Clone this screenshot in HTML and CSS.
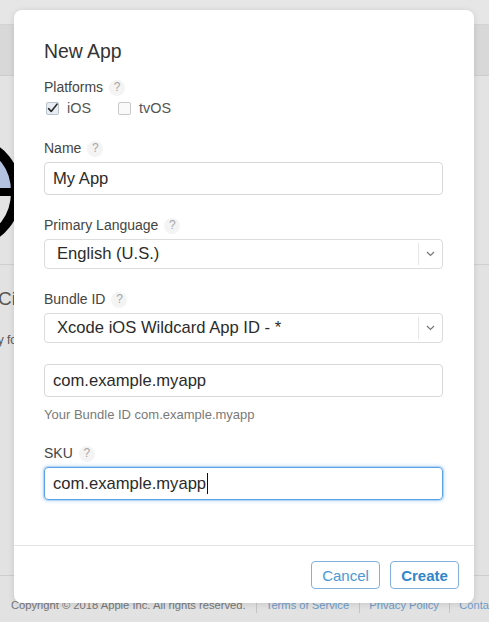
FILE: index.html
```html
<!DOCTYPE html>
<html lang="en">
<head>
<meta charset="utf-8">
<title>New App</title>
<link rel="stylesheet" href="styles.css">
</head>
<body>
<div class="page">
  <header class="topbar"></header>
  <nav class="subnav"></nav>
  <section class="hero">
    <svg class="hero-logo" width="14" height="110" viewBox="0 0 14 110" aria-hidden="true">
      <clipPath id="top-half"><rect x="-80" y="0" width="120" height="52"/></clipPath>
      <ellipse cx="-20" cy="53" rx="36" ry="46" fill="#e4e4e4"/>
      <ellipse cx="-20" cy="53" rx="36" ry="46" fill="#b3c2e0" clip-path="url(#top-half)"/>
      <rect x="-60" y="49" width="80" height="8" fill="#000"/>
      <ellipse cx="-20" cy="53" rx="36" ry="46" fill="none" stroke="#000" stroke-width="10"/>
    </svg>
  </section>
  <main class="intro">
    <p class="intro-title">Ci</p>
    <p class="intro-text">ly for</p>
  </main>
  <footer class="site-footer">
    <span class="copy">Copyright © 2018 Apple Inc. All rights reserved.</span>
    <span class="sep"></span>
    <a class="link">Terms of Service</a>
    <span class="sep"></span>
    <a class="link">Privacy Policy</a>
    <span class="sep"></span>
    <a class="link">Conta</a>
  </footer>
</div>

<div class="dialog" role="dialog" aria-labelledby="dlg-title">
  <div class="dialog-body">
    <h1 class="dialog-title" id="dlg-title">New App</h1>

    <div class="label">Platforms <span class="help">?</span></div>
    <div class="platforms">
      <span class="check">
        <span class="box checked">
          <svg width="13" height="13" viewBox="0 0 13 13"><path d="M2.6 6.6 L5.2 9.4 L11 2.2" fill="none" stroke="#2c2c2c" stroke-width="1.6" stroke-linecap="round" stroke-linejoin="round"/></svg>
        </span>iOS
      </span>
      <span class="check"><span class="box"></span>tvOS</span>
    </div>

    <div class="label">Name <span class="help">?</span></div>
    <div class="input">My App</div>

    <div class="label gap">Primary Language <span class="help">?</span></div>
    <div class="select">
      <span class="select-value">English (U.S.)</span>
      <span class="select-arrow">
        <svg width="9" height="6" viewBox="0 0 9 6"><path d="M1 1 L4.5 4.5 L8 1" fill="none" stroke="#777" stroke-width="1.2"/></svg>
      </span>
    </div>

    <div class="label gap">Bundle ID <span class="help">?</span></div>
    <div class="select">
      <span class="select-value">Xcode iOS Wildcard App ID - *</span>
      <span class="select-arrow">
        <svg width="9" height="6" viewBox="0 0 9 6"><path d="M1 1 L4.5 4.5 L8 1" fill="none" stroke="#777" stroke-width="1.2"/></svg>
      </span>
    </div>
    <div class="input gap-sm">com.example.myapp</div>
    <div class="hint">Your Bundle ID com.example.myapp</div>

    <div class="label gap">SKU <span class="help">?</span></div>
    <div class="input focused">com.example.myapp<span class="caret"></span></div>
  </div>
  <div class="dialog-footer">
    <button class="btn">Cancel</button>
    <button class="btn primary">Create</button>
  </div>
</div>
</body>
</html>
```
FILE: styles.css
```css
* { box-sizing: border-box; }

html, body {
  margin: 0;
  width: 489px;
  height: 622px;
  overflow: hidden;
  background: #dedede;
  font-family: "Liberation Sans", Arial, sans-serif;
  color: #333;
}

/* page behind the dialog (dimmed) */
.page {
  height: 622px;
  display: flex;
  flex-direction: column;
  background: #e2e2e2;
}

.topbar {
  height: 25px;
  background: #e6e6e6;
  border-bottom: 1px solid #d3d3d3;
}

.subnav {
  height: 51px;
  background: #d8d8d8;
  border-bottom: 1px solid #cdcdcd;
}

.hero {
  height: 189px;
  border-bottom: 1px solid #cfcfcf;
  background: #e3e3e3;
  padding-top: 63px;
}

.hero-logo { display: block; }

.intro {
  flex: 1;
  padding-top: 22px;
}

.intro-title {
  margin: 0 0 0 -2px;
  font-size: 19px;
  line-height: 24px;
  color: #555;
}

.intro-text {
  margin: 21px 0 0 -5px;
  font-size: 12px;
  line-height: 16px;
  color: #555;
}

.site-footer {
  height: 47px;
  border-top: 1px solid #cdcdcd;
  padding: 21px 0 0 11px;
  display: flex;
  align-items: flex-start;
  white-space: nowrap;
  overflow: hidden;
  font-size: 11.2px;
  line-height: 16px;
}

.site-footer .copy { color: #777; }
.site-footer .link { color: #6f9cc8; }
.site-footer .sep {
  width: 1px;
  height: 16px;
  background: #c4c4c4;
  margin: 0 10px;
}

/* dialog */
.dialog {
  position: absolute;
  left: 14px;
  top: 10px;
  width: 460px;
  height: 593px;
  background: #fff;
  border-radius: 8px;
  box-shadow: 0 1px 6px rgba(0, 0, 0, 0.12);
  display: flex;
  flex-direction: column;
}

.dialog-body {
  flex: 1;
  padding: 30px 31px 0 30px;
}

.dialog-title {
  margin: 0 0 16px;
  font-size: 19.4px;
  line-height: 23px;
  font-weight: normal;
  color: #333;
}

.label {
  font-size: 14px;
  line-height: 17px;
  color: #444;
  margin-bottom: 5px;
  display: flex;
  align-items: center;
}

.label.gap { margin-top: 22px; }

.help {
  display: inline-flex;
  align-items: center;
  justify-content: center;
  width: 16px;
  height: 16px;
  margin-left: 6px;
  border-radius: 50%;
  background: #f4f4f4;
  color: #a6a6a6;
  font-size: 12px;
}

.platforms {
  display: flex;
  gap: 27px;
  margin: -2px 0 23px 2px;
  height: 18px;
  align-items: center;
}

.check {
  display: flex;
  align-items: center;
  gap: 8px;
  font-size: 14.4px;
  color: #555;
}

.box {
  width: 13px;
  height: 13px;
  border: 1px solid #c9c9c9;
  border-radius: 2px;
  background: #fafafa;
  position: relative;
}

.box.checked { background: #e8edf3; border-color: #b9c2cc; }
.box svg { position: absolute; left: -1px; top: -1px; }

.input {
  height: 33px;
  border: 1px solid #d8d8d8;
  border-radius: 4px;
  padding: 0 8px;
  font-size: 16.6px;
  line-height: 31px;
  color: #2b2b2b;
  display: flex;
  align-items: center;
}

.input.gap-sm { margin-top: 21px; }

.input.focused {
  border-color: #5aa2e4;
  box-shadow: 0 0 0 1px rgba(120, 180, 240, 0.35), 0 0 4px rgba(90, 162, 228, 0.6);
}

.caret {
  display: inline-block;
  width: 1px;
  height: 21px;
  background: #111;
  margin-left: 1px;
}

.select {
  height: 30px;
  border: 1px solid #dcdcdc;
  border-radius: 4px;
  display: flex;
  align-items: stretch;
}

.select-value {
  flex: 1;
  padding-left: 12px;
  font-size: 16.6px;
  line-height: 28px;
  color: #2b2b2b;
}

.select-arrow {
  width: 24px;
  margin: 3px 0;
  border-left: 1px solid #e6e6e6;
  display: flex;
  align-items: center;
  justify-content: center;
}

.hint {
  margin-top: 10px;
  font-size: 13px;
  line-height: 16px;
  color: #7a7a7a;
}

.dialog-footer {
  height: 58px;
  border-top: 1px solid #e4e4e4;
  display: flex;
  justify-content: flex-end;
  gap: 10px;
  padding: 15px 15px 0 0;
}

.btn {
  width: 69px;
  height: 28px;
  border: 1px solid #82b2dc;
  border-radius: 4px;
  background: #fff;
  color: #4a98d6;
  font-family: "Liberation Sans", Arial, sans-serif;
  font-size: 15px;
  padding: 0;
}

.btn.primary {
  font-weight: bold;
  color: #2f86cc;
}
```
